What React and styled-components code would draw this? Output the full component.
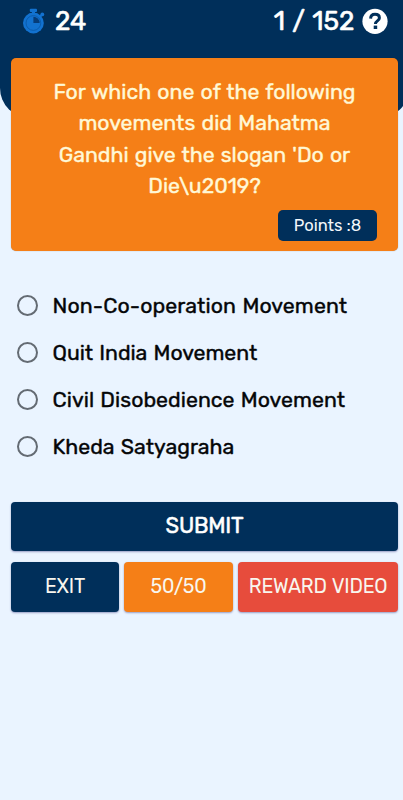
import { useState } from "react";
import styled, { createGlobalStyle } from "styled-components";

const questionLines = [
  { text: "For which one of the following", spacing: 0 },
  { text: "movements did Mahatma", spacing: 0 },
  { text: "Gandhi give the slogan 'Do or", spacing: -0.04 },
  { text: "Die\\u2019?", spacing: 0 },
];

const options = [
  { text: "Non-Co-operation Movement", spacing: 0.1 },
  { text: "Quit India Movement", spacing: -0.04 },
  { text: "Civil Disobedience Movement", spacing: 0.03 },
  { text: "Kheda Satyagraha", spacing: 0 },
];

const TimerIcon = () => (
  <svg width="22" height="26" viewBox="0 0 22 26">
    <g fill="#1272d0">
      <rect x="6.8" y="0.8" width="7.2" height="3.2" rx="1" />
      <rect x="9" y="2" width="3" height="5" />
      <circle cx="10.4" cy="15" r="10.4" />
      <circle cx="19.3" cy="6.4" r="1.9" />
      <path d="M16 8.2l2-2 1.5 1.5-2 2z" />
    </g>
    <circle cx="10.4" cy="15" r="7.4" fill="none" stroke="#0a5cae" strokeWidth="1" />
    <path d="M10.4 8.8v6.2h6.2a6.2 6.2 0 0 0-6.2-6.2z" fill="#063c78" />
  </svg>
);

const HelpIcon = () => (
  <svg width="26" height="26" viewBox="0 0 26 26">
    <circle cx="13" cy="13.3" r="12.6" fill="#fff" />
    <path
      d="M8.6 10.6c.1-2.8 1.8-4.3 4.4-4.3s4.4 1.3 4.4 3.6c0 2.9-4 3-4 6"
      fill="none"
      stroke="#002f5a"
      strokeWidth="3"
    />
    <rect x="11.7" y="17.6" width="3.5" height="3.4" fill="#002f5a" />
  </svg>
);

const App = () => {
  const [selected, setSelected] = useState(null);

  return (
    <Page>
      <GlobalStyle />
      <Header>
        <Timer>
          <TimerIcon />
          <HeaderText>24</HeaderText>
        </Timer>
        <Progress>
          <HeaderText>1 / 152</HeaderText>
          <HelpIcon />
        </Progress>
      </Header>
      <QuestionCard>
        <Question>
          {questionLines.map((line) => (
            <Line key={line.text} $spacing={line.spacing}>
              {line.text}
            </Line>
          ))}
        </Question>
        <Points>Points :8</Points>
      </QuestionCard>
      <Options>
        {options.map((option) => (
          <Option key={option.text} onClick={() => setSelected(option.text)}>
            <Radio $checked={selected === option.text} />
            <OptionText $spacing={option.spacing}>{option.text}</OptionText>
          </Option>
        ))}
      </Options>
      <Actions>
        <SubmitButton>SUBMIT</SubmitButton>
        <ActionRow>
          <ActionButton>EXIT</ActionButton>
          <ActionButton $color="#f57f17">50/50</ActionButton>
          <ActionButton $color="#e74c3c">REWARD VIDEO</ActionButton>
        </ActionRow>
      </Actions>
    </Page>
  );
};

const GlobalStyle = createGlobalStyle`
  * {
    box-sizing: border-box;
  }
  body {
    margin: 0;
    background-color: #eaf4ff;
    font-family: Rubik, Roboto, sans-serif;
  }
`;
const Page = styled.div`
  height: 800px;
  overflow: hidden;
  background-color: #eaf4ff;
`;
const Header = styled.div`
  display: flex;
  justify-content: space-between;
  align-items: flex-start;
  height: 118px;
  margin-right: -6px;
  padding: 8px 21px 0 23px;
  border-radius: 0 0 30px 30px;
  background-color: #002f5a;
  color: white;
`;
const Timer = styled.div`
  display: flex;
  align-items: center;
  height: 26px;
  gap: 10px;
`;
const Progress = styled.div`
  display: flex;
  align-items: center;
  height: 26px;
  gap: 7.5px;
`;
const HeaderText = styled.span`
  padding-top: 2px;
  font-size: 26.2px;
  line-height: 26px;
  word-spacing: 1px;
  -webkit-text-stroke: 0.6px currentColor;
`;
const QuestionCard = styled.div`
  position: relative;
  display: flex;
  flex-direction: column;
  height: 193px;
  margin: -60px 5px 0 11px;
  padding: 18px 20px 10px;
  border-radius: 5px;
  background-color: #f57f17;
  box-shadow: 0 0 1px rgba(0, 0, 0, 0.4);
`;
const Question = styled.div`
  color: #fff8d6;
  font-size: 21.3px;
  line-height: 31.3px;
  text-align: center;
  word-spacing: 1px;
  -webkit-text-stroke: 0.4px currentColor;
`;
const Line = styled.div`
  white-space: nowrap;
  letter-spacing: ${(props) => props.$spacing}px;
`;
const Points = styled.div`
  align-self: flex-end;
  width: 99px;
  height: 31px;
  margin-top: auto;
  margin-right: 1px;
  border-radius: 5px;
  background-color: #002f5a;
  color: #f3f7fb;
  font-size: 16.5px;
  line-height: 31px;
  text-align: center;
`;
const Options = styled.div`
  padding: 31px 0 0 17px;
`;
const Option = styled.div`
  display: flex;
  align-items: center;
  gap: 14.5px;
  height: 47px;
  cursor: pointer;
`;
const Radio = styled.div`
  width: 21px;
  height: 21px;
  padding: 3px;
  border: 2px solid #646b73;
  border-radius: 50%;
  background: ${(props) => (props.$checked ? "#002f5a" : "transparent")};
  background-clip: content-box;
`;
const OptionText = styled.span`
  padding-bottom: 1px;
  color: #050608;
  font-size: 21.3px;
  white-space: nowrap;
  letter-spacing: ${(props) => props.$spacing}px;
  word-spacing: 1px;
  -webkit-text-stroke: 0.4px currentColor;
`;
const Actions = styled.div`
  padding: 32px 5px 0 11px;
`;
const Button = styled.button`
  padding: 0 0 2px;
  border: none;
  border-radius: 4px;
  color: white;
  font-family: inherit;
  letter-spacing: -0.25px;
  box-shadow: 0 1px 2px rgba(30, 30, 110, 0.4);
  cursor: pointer;
`;
const SubmitButton = styled(Button)`
  display: block;
  width: 100%;
  height: 49px;
  background-color: #002f5a;
  font-size: 21.8px;
  -webkit-text-stroke: 0.5px currentColor;
`;
const ActionRow = styled.div`
  display: grid;
  grid-template-columns: 108px 109px 160px;
  gap: 5px;
  margin-top: 11px;
`;
const ActionButton = styled(Button)`
  height: 50px;
  background-color: ${(props) => props.$color || "#002f5a"};
  color: #f8f6ee;
  font-size: 19.6px;
  word-spacing: 1px;
  white-space: nowrap;
`;

export default App;
